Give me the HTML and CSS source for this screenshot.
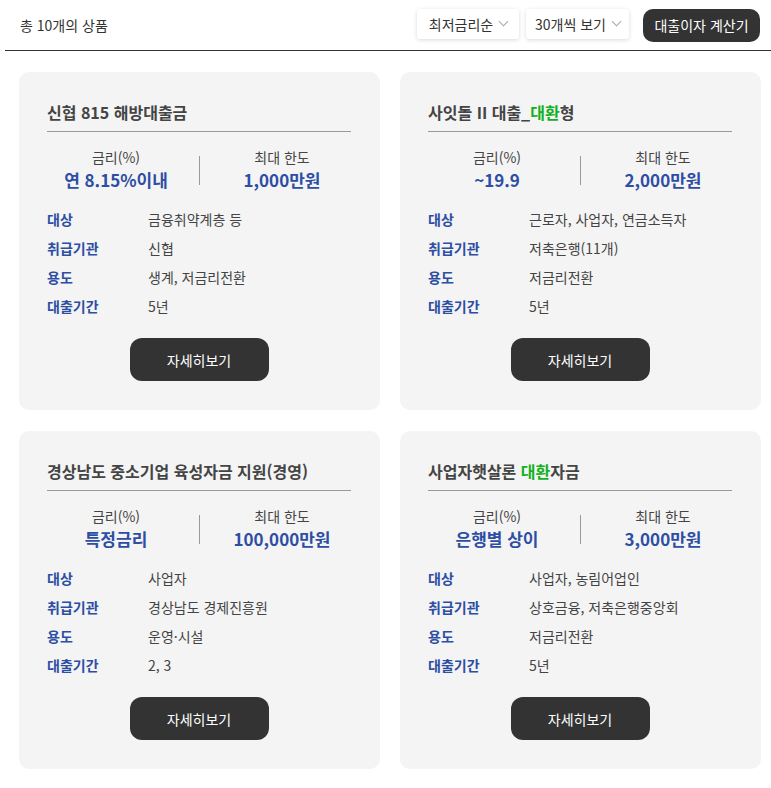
FILE: index.html
```html
<!DOCTYPE html>
<html lang="ko">
<head>
<meta charset="UTF-8">
<meta name="viewport" content="width=device-width, initial-scale=1.0">
<title>대출 상품 목록</title>
<link rel="stylesheet" href="styles.css">
</head>
<body>
<div class="top-bar">
  <div class="count">총 10개의 상품</div>
  <div class="controls">
    <div class="select">최저금리순 <span class="arrow"></span></div>
    <div class="select">30개씩 보기<span class="arrow"></span></div>
    <button class="calc-btn">대출이자 계산기</button>
  </div>
</div>

<div class="product-list">
  <div class="card">
    <h3 class="card-title">신협 815 해방대출금</h3>
    <div class="stats">
      <div class="stat">
        <div class="stat-label">금리(%)</div>
        <div class="stat-value">연 8.15%이내</div>
      </div>
      <div class="stat">
        <div class="stat-label">최대 한도</div>
        <div class="stat-value">1,000만원</div>
      </div>
    </div>
    <dl class="info">
      <dt>대상</dt><dd>금융취약계층 등</dd>
      <dt>취급기관</dt><dd>신협</dd>
      <dt>용도</dt><dd>생계, 저금리전환</dd>
      <dt>대출기간</dt><dd>5년</dd>
    </dl>
    <button class="detail-btn">자세히보기</button>
  </div>

  <div class="card">
    <h3 class="card-title">사잇돌 II 대출_<span class="hl">대환</span>형</h3>
    <div class="stats">
      <div class="stat">
        <div class="stat-label">금리(%)</div>
        <div class="stat-value">~19.9</div>
      </div>
      <div class="stat">
        <div class="stat-label">최대 한도</div>
        <div class="stat-value">2,000만원</div>
      </div>
    </div>
    <dl class="info">
      <dt>대상</dt><dd>근로자, 사업자, 연금소득자</dd>
      <dt>취급기관</dt><dd>저축은행(11개)</dd>
      <dt>용도</dt><dd>저금리전환</dd>
      <dt>대출기간</dt><dd>5년</dd>
    </dl>
    <button class="detail-btn">자세히보기</button>
  </div>

  <div class="card">
    <h3 class="card-title">경상남도 중소기업 육성자금 지원(경영)</h3>
    <div class="stats">
      <div class="stat">
        <div class="stat-label">금리(%)</div>
        <div class="stat-value">특정금리</div>
      </div>
      <div class="stat">
        <div class="stat-label">최대 한도</div>
        <div class="stat-value">100,000만원</div>
      </div>
    </div>
    <dl class="info">
      <dt>대상</dt><dd>사업자</dd>
      <dt>취급기관</dt><dd>경상남도 경제진흥원</dd>
      <dt>용도</dt><dd>운영·시설</dd>
      <dt>대출기간</dt><dd>2, 3</dd>
    </dl>
    <button class="detail-btn">자세히보기</button>
  </div>

  <div class="card">
    <h3 class="card-title">사업자햇살론 <span class="hl">대환</span>자금</h3>
    <div class="stats">
      <div class="stat">
        <div class="stat-label">금리(%)</div>
        <div class="stat-value">은행별 상이</div>
      </div>
      <div class="stat">
        <div class="stat-label">최대 한도</div>
        <div class="stat-value">3,000만원</div>
      </div>
    </div>
    <dl class="info">
      <dt>대상</dt><dd>사업자, 농림어업인</dd>
      <dt>취급기관</dt><dd>상호금융, 저축은행중앙회</dd>
      <dt>용도</dt><dd>저금리전환</dd>
      <dt>대출기간</dt><dd>5년</dd>
    </dl>
    <button class="detail-btn">자세히보기</button>
  </div>
</div>
</body>
</html>
```

FILE: styles.css
```css
body {
  margin: 0;
  background-color: #fff;
  font-family: "Noto Sans CJK KR", "Noto Sans", sans-serif;
  color: #333;
}

.top-bar {
  display: flex;
  justify-content: space-between;
  align-items: center;
  margin-left: 5px;
  padding: 8px 11px 8px 15px;
  border-bottom: 1px solid #333;
  height: 34px;
}

.count {
  font-size: 14px;
  color: #333;
}

.controls {
  display: flex;
  align-items: center;
  gap: 7px;
}

.select {
  display: flex;
  align-items: center;
  justify-content: center;
  gap: 4px;
  height: 30px;
  width: 102px;
  box-sizing: border-box;
  background-color: #fff;
  border-radius: 3px;
  box-shadow: 0 1px 4px rgba(0, 0, 0, 0.15);
  font-size: 14px;
  color: #333;
  align-self: flex-start;
}

.select + .select {
  width: 103px;
}

.arrow {
  width: 6px;
  height: 6px;
  border-right: 1px solid #aaa;
  border-bottom: 1px solid #aaa;
  transform: rotate(45deg);
  margin-top: -5px;
  margin-left: 3px;
}

.calc-btn {
  margin-left: 7px;
  height: 33px;
  width: 117px;
  padding: 0;
  background-color: #333;
  color: #fff;
  border: none;
  border-radius: 10px;
  font-family: inherit;
  font-size: 14px;
  align-self: flex-start;
}

.product-list {
  display: grid;
  grid-template-columns: repeat(2, 361px);
  gap: 21px 20px;
  padding: 21px 0 0 19px;
}

.card {
  background-color: #f4f4f4;
  border-radius: 10px;
  padding: 28px 29px 29px 28px;
  display: flex;
  flex-direction: column;
}

.card-title {
  margin: 0;
  padding-bottom: 7px;
  border-bottom: 1px solid #999;
  font-size: 16px;
  font-weight: bold;
  color: #444;
}

.hl {
  color: #12b022;
}

.stats {
  display: flex;
  margin: 15px -14px 0;
}

.stat {
  flex: 1;
  text-align: center;
}

.stat + .stat {
  position: relative;
}

.stat + .stat::before {
  content: "";
  position: absolute;
  left: 0;
  top: 9px;
  height: 29px;
  border-left: 1px solid #999;
}

.stat-label {
  font-size: 14px;
  color: #444;
  line-height: 20px;
}

.stat-value {
  font-size: 17px;
  font-weight: bold;
  color: #2d4ea3;
  line-height: 26px;
}

.info {
  display: grid;
  grid-template-columns: 101px 1fr;
  row-gap: 9px;
  margin: 16px 0 0 0;
  font-size: 14px;
  line-height: 20px;
}

.info dt {
  font-weight: bold;
  color: #2d4ea3;
}

.info dd {
  margin: 0;
  color: #444;
}

.detail-btn {
  align-self: center;
  margin-top: 22px;
  width: 139px;
  height: 43px;
  background-color: #333;
  color: #fff;
  border: none;
  border-radius: 12px;
  font-family: inherit;
  font-size: 14px;
}
```
